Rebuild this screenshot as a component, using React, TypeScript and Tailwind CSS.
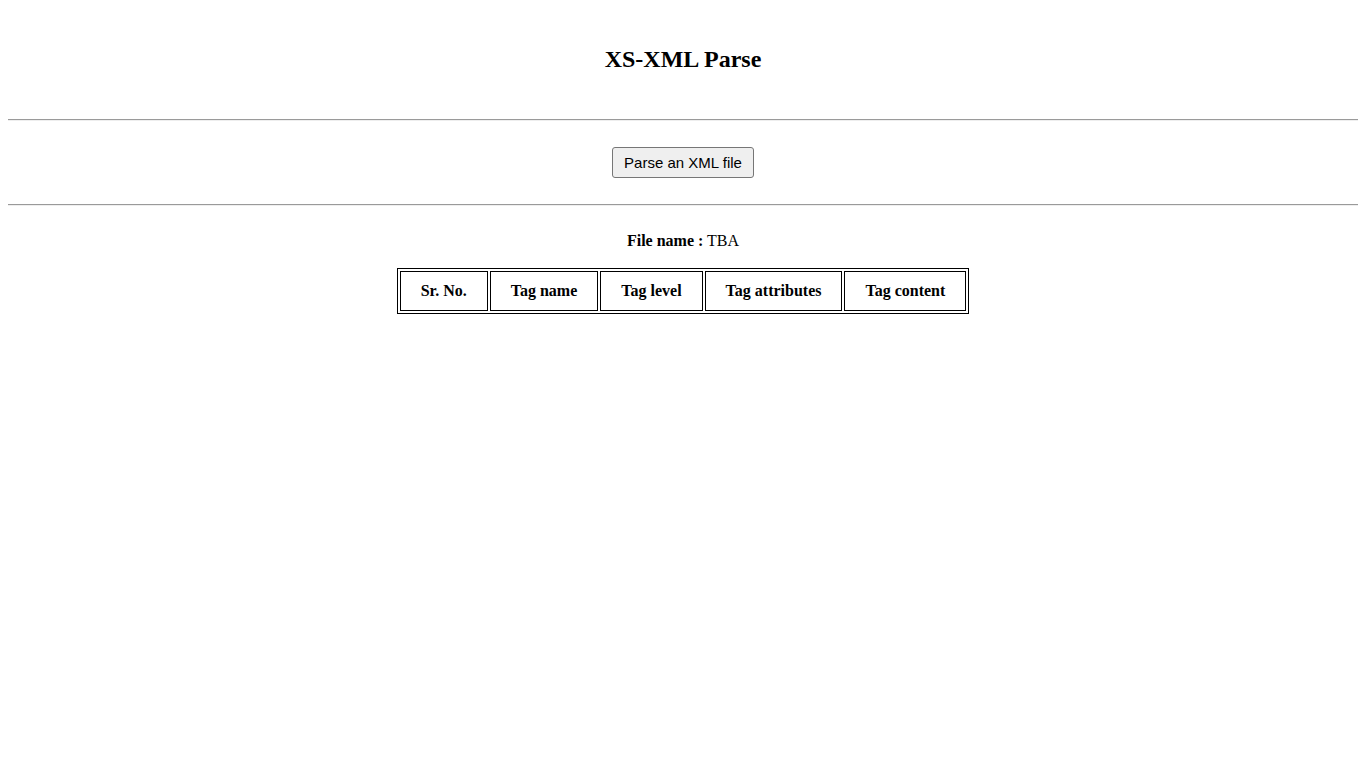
import React from 'react';

const columns = ['Sr. No.', 'Tag name', 'Tag level', 'Tag attributes', 'Tag content'];

function Divider() {
  return <hr className="h-0 border-0 border-t border-b border-t-[#9a9a9a] border-b-[#eeeeee]" />;
}

export default function App() {
  return (
    <div className="min-h-screen bg-white px-2 text-black font-['Liberation_Serif','Times_New_Roman',serif]">
      <h2 className="pt-[45px] pb-[46px] text-center text-[24px] font-bold leading-[28px]">XS-XML Parse</h2>

      <Divider />

      <div className="flex justify-center pt-[26px] pb-[26px]">
        <button
          type="button"
          className="rounded-[3px] border border-[#767676] bg-[#efefef] px-[11px] py-[6px] text-[15px] leading-[17px] text-black font-['Liberation_Sans',Arial,sans-serif]"
        >
          Parse an XML file
        </button>
      </div>

      <Divider />

      <p className="pt-[26px] text-center text-[16px] leading-[18px]">
        <span className="font-bold">File name :</span> TBA
      </p>

      <div className="flex justify-center pt-[18px]">
        <table className="border-separate border-spacing-[2px] border border-black">
          <thead>
            <tr>
              {columns.map((c) => (
                <th key={c} className="border border-black px-5 py-[10px] text-[16px] font-bold leading-[18px]">
                  {c}
                </th>
              ))}
            </tr>
          </thead>
        </table>
      </div>
    </div>
  );
}
